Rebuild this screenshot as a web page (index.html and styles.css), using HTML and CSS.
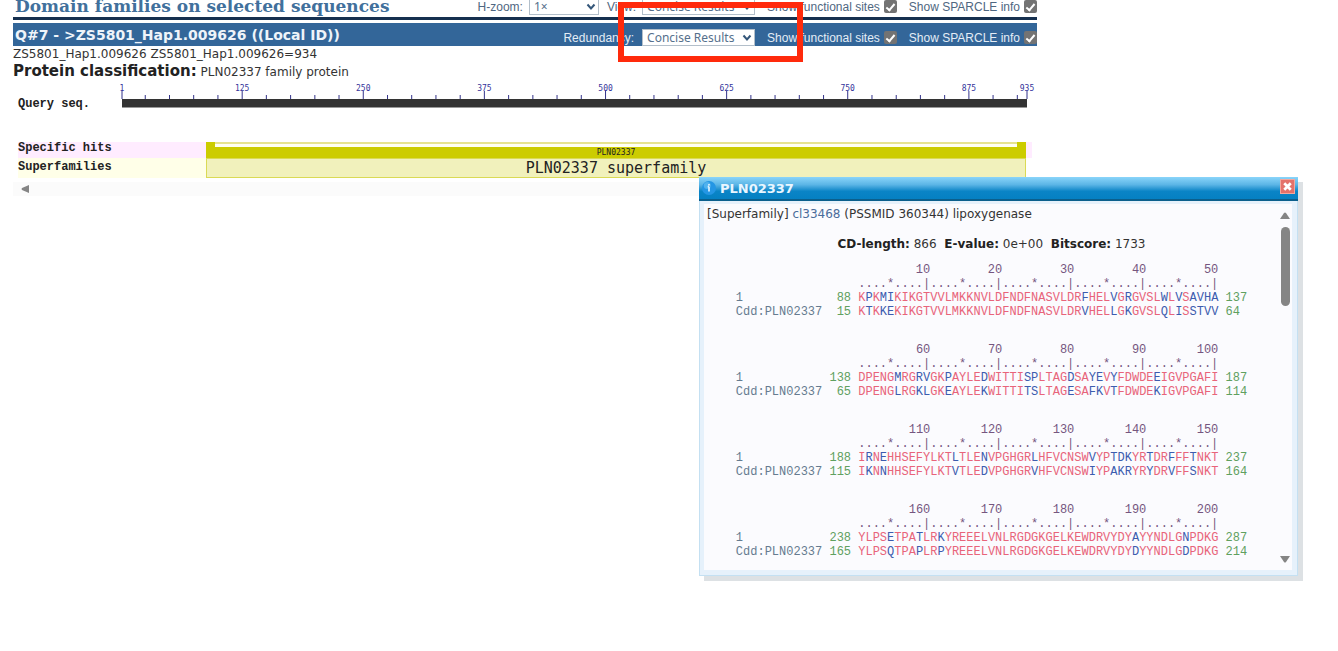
FILE: index.html
```html
<!DOCTYPE html>
<html lang="en">
<head>
<meta charset="utf-8">
<title>Domain families on selected sequences</title>
<link rel="stylesheet" href="styles.css">
</head>
<body>
<main class="results">
  <header class="topbar">
    <h1 class="topbar-title">Domain families on selected sequences</h1>
    <div class="controls controls-light">
      <label class="field" for="hzoom">H-zoom:</label>
      <span class="picker picker-small"><select id="hzoom"><option>1×</option></select><svg class="chevron" viewBox="0 0 10 8"><path d="M1.5 1.5 5 5.5 8.5 1.5"/></svg></span>
      <label class="field" for="view">View:</label>
      <span class="picker"><select id="view"><option>Concise Results</option></select><svg class="chevron" viewBox="0 0 10 8"><path d="M1.5 1.5 5 5.5 8.5 1.5"/></svg></span>
      <label class="check">Show functional sites <input type="checkbox" checked></label>
      <label class="check">Show SPARCLE info <input type="checkbox" checked></label>
    </div>
  </header>

  <section class="query">
    <div class="query-bar">
      <h2 class="query-title">Q#7 - &gt;ZS5801_Hap1.009626 ((Local ID))</h2>
      <div class="controls">
        <label class="field" for="redundancy">Redundancy:</label>
        <span class="picker"><select id="redundancy"><option>Concise Results</option></select><svg class="chevron" viewBox="0 0 10 8"><path d="M1.5 1.5 5 5.5 8.5 1.5"/></svg></span>
        <label class="check">Show functional sites <input type="checkbox" checked></label>
        <label class="check">Show SPARCLE info <input type="checkbox" checked></label>
      </div>
    </div>
    <p class="query-id">ZS5801_Hap1.009626 ZS5801_Hap1.009626=934</p>
    <p class="query-class"><b>Protein classification:</b> PLN02337 family protein</p>
  </section>

  <section class="graph">
    <div class="track track-query">
      <span class="track-name">Query seq.</span>
      <div class="ruler"><svg id="ruler" class="ruler-svg"></svg><div class="ruler-bar"></div></div>
    </div>
    <div class="track track-specific">
      <span class="track-name">Specific hits</span>
      <div class="hit"><div class="hit-notch"></div><span class="hit-name">PLN02337</span></div>
    </div>
    <div class="track track-super">
      <span class="track-name">Superfamilies</span>
      <div class="family">PLN02337 superfamily</div>
    </div>
    <div class="hscroll"><svg class="hscroll-arrow" viewBox="0 0 8 8"><path d="M8 0v8L1 5Q0 4 1 3z"/></svg></div>
  </section>
</main>

<div class="highlight"></div>

<aside class="popup">
  <div class="popup-head">
    <svg class="info" viewBox="0 0 16 16"><circle cx="8" cy="8" r="8" fill="#2496e4"/><circle cx="6" cy="5" r="4" fill="#50b2ee"/><path d="M8 3.500v1.500M8 6.500v5.500M6.500 6.500H8" stroke="#d8f0ff" stroke-width="2" fill="none"/></svg>
    <h3 class="popup-title">PLN02337</h3>
    <button class="close" type="button" aria-label="Close"><svg viewBox="0 0 14 14"><path d="M3.500 3.500l7 7M10.500 3.500l-7 7"/></svg></button>
  </div>
  <div class="popup-body">
    <div class="popup-content">
      <p class="summary">[Superfamily] <a href="#cl33468">cl33468</a> (PSSMID 360344) lipoxygenase</p>
      <p class="stats"><b>CD-length:</b> 866 &nbsp;<b>E-value:</b> 0e+00 &nbsp;<b>Bitscore:</b> 1733</p>
      <div id="alignments" class="alignments"></div>
    </div>
    <div class="vscroll">
      <svg class="arrow" viewBox="0 0 10 7"><path d="M0 7h10L6 1Q5 0 4 1z"/></svg>
      <div class="thumb"></div>
      <svg class="arrow arrow-down" viewBox="0 0 10 7"><path d="M0 0h10L6 6Q5 7 4 6z"/></svg>
    </div>
  </div>
</aside>
<script src="script.js"></script>
</body>
</html>
```

FILE: styles.css
```css
body {
  margin: 0;
  background: #fff;
  color: #333;
  font-family: "DejaVu Sans", sans-serif;
  font-size: 12px;
}
h1, h2, h3, p { margin: 0; }

.results {
  max-width: 1024px;
  margin-left: 13px;
}

/* header rows */
.topbar {
  display: flex;
  align-items: flex-end;
  justify-content: space-between;
  height: 17px;
  overflow: hidden;
  border-bottom: 3px solid #16304f;
}
.topbar-title {
  padding-left: 2px;
  color: #41709c;
  font: bold 17px/22px "DejaVu Serif", serif;
  white-space: nowrap;
}
.controls {
  display: flex;
  align-items: center;
  color: #e4edf6;
  font: 12px/16px "Liberation Sans", sans-serif;
  white-space: nowrap;
}
.controls-light {
  padding-bottom: 2px;
  color: #4f6781;
}
.field { margin-right: 8px; }
.controls-light .field { margin-right: 6px; }
.check {
  display: flex;
  align-items: center;
  gap: 4px;
  margin-left: 12px;
}
.check input {
  appearance: none;
  width: 13px;
  height: 13px;
  margin: 0;
  border-radius: 2px;
  background: #737373;
  display: grid;
  place-items: center;
}
.check input::before {
  content: "";
  width: 3px;
  height: 7px;
  border: solid #fff;
  border-width: 0 2px 2px 0;
  transform: rotate(40deg);
}
.picker {
  display: grid;
  align-items: center;
  width: 113px;
}
.picker-small {
  width: 70px;
  margin-right: 8px;
}
.picker select {
  grid-area: 1 / 1;
  appearance: none;
  width: 100%;
  height: 17px;
  margin: 0;
  padding: 0 4px;
  border: 1px solid #b3bfca;
  border-radius: 0;
  background: #fff;
  color: #55708c;
  font: 12px/15px "Noto Sans", sans-serif;
}
.chevron {
  grid-area: 1 / 1;
  justify-self: end;
  width: 10px;
  height: 8px;
  margin-right: 3px;
  pointer-events: none;
  fill: none;
  stroke: #35577a;
  stroke-width: 2;
}
.query-bar {
  display: flex;
  align-items: center;
  justify-content: space-between;
  height: 23px;
  margin-top: 3px;
  background: #336699;
}
.query-bar .controls { padding-top: 6px; }
.query-title {
  padding-left: 2px;
  color: #eef4fa;
  font-size: 14px;
  white-space: nowrap;
}
.query-id { font-size: 12px; line-height: 16px; }
.query-class { font-size: 12px; line-height: 18px; }
.query-class b { font-size: 15px; color: #222; }

/* domain graph */
.graph {
  margin-top: 2px;
  color: #222;
  font-family: "Liberation Mono", monospace;
}
.track {
  display: grid;
  grid-template-columns: 188px 1fr;
  margin: 0 5px;
}
.track-name {
  font-size: 12px;
  font-weight: bold;
  line-height: 14px;
}
.track-query {
  grid-template-columns: 104px 1fr;
  margin-right: 10px;
  margin-bottom: 34px;
  align-items: end;
}
.ruler-svg {
  display: block;
  width: 100%;
  height: 16px;
  overflow: visible;
  fill: #33339a;
  font: 8px "DejaVu Sans Mono", monospace;
}
.ruler-svg line { stroke: #33338a; }
.ruler-bar {
  height: 8px;
  border-bottom: 1px solid #999;
  background: #333;
}
.track-query .track-name { line-height: 8px; }
.track-specific { background: #ffecff; height: 16px; }
.track-specific .track-name { line-height: 12px; }
.track-super { height: 20px; align-items: start; background: linear-gradient(90deg, #ffffe8 188px, #fff 188px); }
.track-super .track-name { padding-top: 2px; }
.hit {
  margin-right: 6px;
  background: #cccc00;
  text-align: center;
  font-size: 8px;
  line-height: 9px;
}
.hit-notch {
  height: 3px;
  margin: 0 9px;
  border-top: 2px solid #e6e390;
  background: #fffff2;
}
.hit-name {
  display: block;
  padding-top: 1px;
  font-family: "DejaVu Sans Mono", monospace;
}
.family {
  height: 18px;
  margin-right: 6px;
  border: 1px solid #dada55;
  background: #f1f1bc;
  font: 15px/18px "DejaVu Sans Mono", monospace;
  text-align: center;
}
.hscroll {
  height: 14px;
  margin-top: 4px;
  padding-left: 8px;
  display: flex;
  align-items: center;
  background: #fbfbfb;
}
.hscroll-arrow { width: 8px; height: 8px; fill: #858585; }

/* annotation frame over the page */
.highlight {
  position: absolute;
  left: 618px;
  top: 2px;
  width: 173px;
  height: 48px;
  border: 6px solid #ff2a0c;
}

/* pop-up window over the graph */
.popup {
  position: absolute;
  left: 699px;
  top: 177px;
  width: 599px;
  background: #e6f1fb;
  box-shadow: 5px 5px 0 #dde1e4, inset 0 0 0 1px #c4e0f2;
}
.popup-head {
  display: flex;
  align-items: center;
  height: 22px;
  padding: 0 3px;
  border-bottom: 2px solid #0b5f8c;
  background: linear-gradient(#8ad5fa, #5bb5e6 35%, #0a84c6 65%, #0580c2);
}
.info { width: 14px; height: 16px; }
.popup-title {
  flex: 1;
  padding-left: 4px;
  color: #e9f6ff;
  font-size: 13px;
}
.close {
  width: 15px;
  height: 15px;
  margin-bottom: 3px;
  padding: 0;
  border: 1px solid #f3a79d;
  background: #e4726a;
  display: grid;
}
.close path { stroke: #fff; stroke-width: 3; fill: none; }
.popup-body {
  display: flex;
  margin: 3px 6px 6px 5px;
  height: 366px;
  background: #fbfbfe;
}
.popup-content {
  flex: 1;
  padding: 0 2px 0 3px;
}
.summary { font-size: 12px; line-height: 20px; }
.summary a { color: #4a6c9b; text-decoration: none; }
.stats {
  margin-top: 10px;
  font-size: 12px;
  line-height: 20px;
  text-align: center;
}
.stats b { color: #222; }
.alignments { margin-top: 9px; }
.block {
  margin: 0 auto 24px;
  border-collapse: collapse;
  font: 12px/14px "Liberation Mono", monospace;
  white-space: pre;
}
.block td { padding: 0; }
.block .name { width: 13ch; color: #667b90; }
.block .start { width: 3ch; text-align: right; color: #5fa05f; }
.block .seq { width: 52ch; text-align: center; color: #e8647a; }
.block .end { width: 3ch; color: #5fa05f; }
.block .scale { color: #75567f; }
.block .diff { color: #3c5cae; }
.vscroll {
  display: flex;
  flex-direction: column;
  align-items: center;
  width: 14px;
  padding: 8px 0 7px;
  box-sizing: border-box;
}
.arrow { width: 10px; height: 7px; fill: #858585; }
.thumb {
  width: 9px;
  height: 79px;
  margin-top: 8px;
  border-radius: 5px;
  background: #858585;
}
.arrow-down { margin-top: auto; }
```

FILE: script.js
```js
// Alignment blocks: [query start, query, query end, domain start, domain, domain end]
const blocks = [
  [88, "KPKMIKIKGTVVLMKKNVLDFNDFNASVLDRFHELVGRGVSLWLVSAVHA", 137,
   15, "KTKKEKIKGTVVLMKKNVLDFNDFNASVLDRVHELLGKGVSLQLISSTVV", 64],
  [138, "DPENGMRGRVGKPAYLEDWITTISPLTAGDSAYEVYFDWDEEIGVPGAFI", 187,
   65, "DPENGLRGKLGKEAYLEKWITTITSLTAGESAFKVTFDWDEKIGVPGAFI", 114],
  [188, "IRNEHHSEFYLKTLTLENVPGHGRLHFVCNSWVYPTDKYRTDRFFFTNKT", 237,
   115, "IKNNHHSEFYLKTVTLEDVPGHGRVHFVCNSWIYPAKRYRYDRVFFSNKT", 164],
  [238, "YLPSETPATLRKYREEELVNLRGDGKGELKEWDRVYDYAYYNDLGNPDKG", 287,
   165, "YLPSQTPAPLRPYREEELVNLRGDGKGELKEWDRVYDYDYYNDLGDPDKG", 214]
];

const mark = (seq, other) =>
  [...seq].map((c, i) => c === other[i] ? c : `<span class="diff">${c}</span>`).join("");

const row = (name, start, seq, end, cls = "") =>
  `<tr><td class="name">${name}</td><td class="start">${start}</td>` +
  `<td class="seq ${cls}">${seq}</td><td class="end">${end}</td></tr>`;

document.getElementById("alignments").innerHTML = blocks.map(([qs, q, qe, ds, d, de], n) => {
  const numbers = [1, 2, 3, 4, 5].map(i => String(n * 50 + i * 10).padStart(10)).join("");
  return `<table class="block">` +
    row("", "", numbers, "", "scale") +
    row("", "", "....*....|".repeat(5), "", "scale") +
    row("1", qs, mark(q, d), qe) +
    row("Cdd:PLN02337", ds, mark(d, q), de) +
    `</table>`;
}).join("");

// Query ruler: a tick each 25 residues, a label each 125
const length = 935;
const at = pos => ((pos - 1) / (length - 1) * 100).toFixed(2) + "%";
const ticks = [];
for (let pos = 25; pos < length; pos += 25) {
  ticks.push(`<line x1="${at(pos)}" x2="${at(pos)}" y1="${pos % 125 ? 12 : 8}" y2="16"/>`);
}
for (const pos of [1, 125, 250, 375, 500, 625, 750, 875, length]) {
  ticks.push(`<text x="${at(pos)}" y="8" text-anchor="middle">${pos}</text>`);
}
ticks.push(`<line x1="0" x2="0" y1="8" y2="16"/><line x1="100%" x2="100%" y1="8" y2="16"/>`);
document.getElementById("ruler").innerHTML = ticks.join("");
```
